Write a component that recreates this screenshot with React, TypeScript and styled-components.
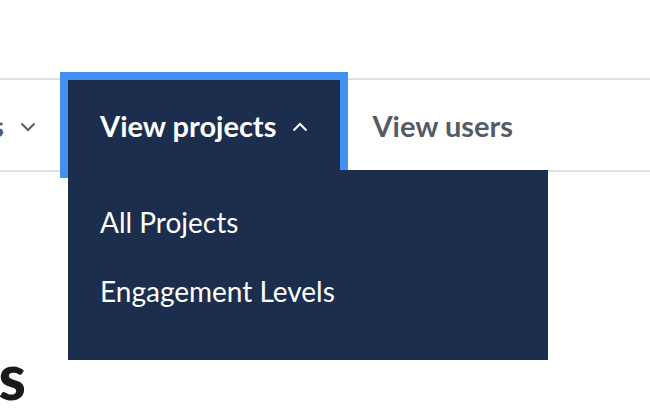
import styled, { createGlobalStyle } from "styled-components";

const GlobalStyle = createGlobalStyle`
  html, body {
    margin: 0;
    padding: 0;
    background: #ffffff;
    overflow: hidden;
  }
  body {
    font-family: Lato, "Liberation Sans", sans-serif;
  }
`;

const navy = "#1c2e4e";
const focusBlue = "#4391f3";

// styled components
const Page = styled.div`
  width: 650px;
  height: 408px;
  padding-top: 78px;
  box-sizing: border-box;
`;

const NavBar = styled.nav`
  display: flex;
  align-items: stretch;
  height: 90px;
  border-top: 2px solid #e1e1e1;
  border-bottom: 2px solid #e1e1e1;
`;

// keeps only the tail of an item that runs off the left edge
const LeftClip = styled.div<{ $width: number }>`
  width: ${(p) => p.$width}px;
  flex-shrink: 0;
  overflow: hidden;
  display: flex;
  justify-content: flex-end;
`;

const Tab = styled.div<{ $active?: boolean }>`
  position: relative;
  flex-shrink: 0;
  display: flex;
  align-items: center;
  gap: 16px;
  padding: 0 32px;
  font-size: 29px;
  font-weight: 700;
  white-space: nowrap;
  color: ${(p) => (p.$active ? "#ffffff" : "#555b65")};
  background: ${(p) => (p.$active ? navy : "transparent")};
  outline: ${(p) => (p.$active ? `8px solid ${focusBlue}` : "none")};
`;

const Chevron = styled.svg`
  width: 16px;
  height: 10px;
  margin-top: 3px;
  flex-shrink: 0;
`;

const Dropdown = styled.ul`
  position: absolute;
  top: 100%;
  left: 0;
  z-index: 2;
  width: 480px;
  height: 190px;
  margin: 0;
  padding: 18px 0 0;
  box-sizing: border-box;
  list-style: none;
  background: ${navy};
`;

const DropdownItem = styled.li`
  padding: 0 32px;
  line-height: 69px;
  font-size: 28px;
  font-weight: 400;
  color: #ffffff;
`;

const Main = styled.main`
  padding-top: 173px;
`;

const Heading = styled.h1`
  margin: 0;
  flex-shrink: 0;
  font-size: 62px;
  line-height: 1;
  font-weight: 900;
  color: #1a1a1a;
  white-space: nowrap;
`;

function ChevronDown({ color }: { color: string }) {
  return (
    <Chevron viewBox="0 0 16 10" fill="none">
      <path d="M1.5 1.5 L8 8 L14.5 1.5" stroke={color} strokeWidth="2" />
    </Chevron>
  );
}

function ChevronUp({ color }: { color: string }) {
  return (
    <Chevron viewBox="0 0 16 10" fill="none">
      <path d="M1.5 8.5 L8 2 L14.5 8.5" stroke={color} strokeWidth="2" />
    </Chevron>
  );
}

export default function App() {
  const projectLinks = ["All Projects", "Engagement Levels"];

  // render
  return (
    <>
      <GlobalStyle />
      <Page>
        <NavBar>
          <LeftClip $width={68}>
            <Tab>
              View teams
              <ChevronDown color="#5a5f66" />
            </Tab>
          </LeftClip>
          <Tab $active>
            View projects
            <ChevronUp color="#ffffff" />
            <Dropdown>
              {projectLinks.map((link) => (
                <DropdownItem key={link}>{link}</DropdownItem>
              ))}
            </Dropdown>
          </Tab>
          <Tab>View users</Tab>
        </NavBar>
        <Main>
          <LeftClip $width={26}>
            <Heading>Projects</Heading>
          </LeftClip>
        </Main>
      </Page>
    </>
  );
}
